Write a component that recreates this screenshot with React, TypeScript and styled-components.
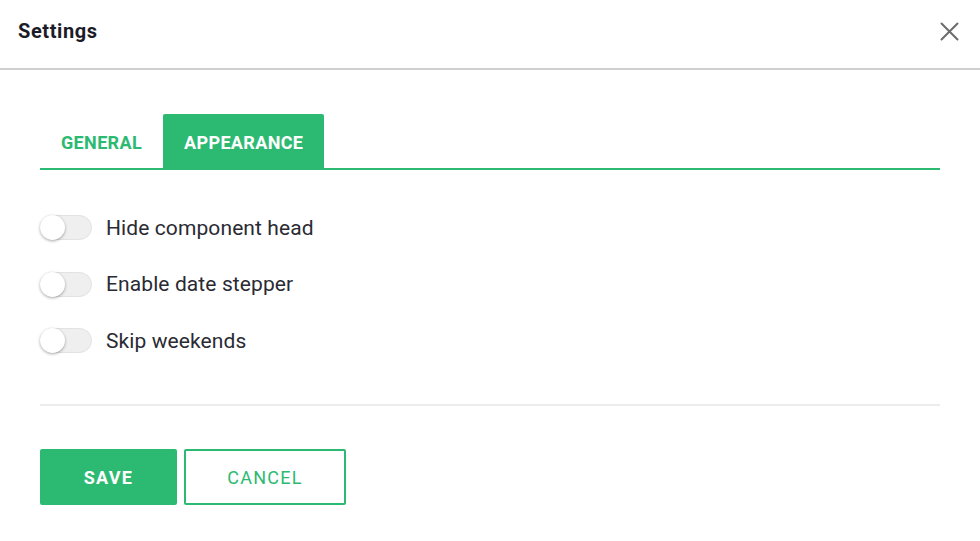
import React, { useState } from "react";
import styled, { createGlobalStyle } from "styled-components";

const GREEN = "#2cba72";

const Global = createGlobalStyle`
  html, body { margin: 0; padding: 0; background: #fff; }
  body { font-family: Roboto, "Noto Sans", sans-serif; }
  * { box-sizing: border-box; }
`;

const Dialog = styled.div`
  width: 980px;
  height: 541px;
  background: #fff;
  display: flex;
  flex-direction: column;
`;

const Header = styled.header`
  height: 70px;
  border-bottom: 2px solid #cfcfcf;
  display: flex;
  align-items: center;
  justify-content: space-between;
  padding: 0 20px 0 18px;
`;

const Title = styled.h1`
  margin: 0;
  font-size: 20px;
  font-weight: 700;
  letter-spacing: 0.6px;
  color: #1c1c28;
  padding-bottom: 6px;
`;

const CloseButton = styled.button`
  border: none;
  background: none;
  padding: 0;
  width: 22px;
  height: 22px;
  display: flex;
  align-items: center;
  justify-content: center;
  cursor: pointer;
  margin-bottom: 6px;
`;

const Body = styled.div`
  padding: 44px 40px 0 40px;
  display: flex;
  flex-direction: column;
`;

const TabBar = styled.div`
  display: flex;
  border-bottom: 2px solid ${GREEN};
  height: 56px;
`;

const Tab = styled.button<{ $active?: boolean }>`
  border: none;
  border-radius: 2px 2px 0 0;
  padding: 2px 21px 0;
  height: 54px;
  font-family: Roboto, sans-serif;
  font-size: 18px;
  font-weight: 700;
  letter-spacing: 0.35px;
  background: ${(p) => (p.$active ? GREEN : "transparent")};
  color: ${(p) => (p.$active ? "#fff" : GREEN)};
  cursor: pointer;
`;

const Options = styled.div`
  display: flex;
  flex-direction: column;
  padding-top: 45px;
  gap: 31.5px;
  padding-bottom: 51px;
  border-bottom: 2px solid #ececec;
`;

const Row = styled.label`
  display: flex;
  align-items: center;
  gap: 14px;
  height: 25px;
  cursor: pointer;
`;

const Track = styled.span<{ $on: boolean }>`
  position: relative;
  width: 52px;
  height: 25px;
  border-radius: 13px;
  background: ${(p) => (p.$on ? "#a6e3c3" : "#efefef")};
  border: 1px solid #e2e2e2;
  flex-shrink: 0;
`;

const Knob = styled.span<{ $on: boolean }>`
  position: absolute;
  top: -1px;
  left: ${(p) => (p.$on ? "26px" : "-1px")};
  width: 25px;
  height: 25px;
  border-radius: 50%;
  background: ${(p) => (p.$on ? GREEN : "#fff")};
  box-shadow: 0 1px 3px rgba(0, 0, 0, 0.35);
`;

const Label = styled.span`
  font-size: 21px;
  color: #2a2a33;
  letter-spacing: 0.1px;
`;

const Actions = styled.div`
  display: flex;
  gap: 7px;
  padding-top: 43px;
`;

const Button = styled.button<{ $primary?: boolean }>`
  height: 56px;
  padding: 0;
  width: ${(p) => (p.$primary ? "137px" : "162px")};
  border-radius: 2px;
  border: 2px solid ${GREEN};
  background: ${(p) => (p.$primary ? GREEN : "#fff")};
  color: ${(p) => (p.$primary ? "#fff" : GREEN)};
  font-family: Roboto, sans-serif;
  font-size: 18px;
  font-weight: ${(p) => (p.$primary ? 700 : 400)};
  letter-spacing: 1.3px;
  cursor: pointer;
`;

const Toggle: React.FC<{ label: string }> = ({ label }) => {
  const [on, setOn] = useState(false);
  return (
    <Row onClick={() => setOn(!on)}>
      <Track $on={on}>
        <Knob $on={on} />
      </Track>
      <Label>{label}</Label>
    </Row>
  );
};

export default function App() {
  const [tab, setTab] = useState("appearance");
  return (
    <>
      <Global />
      <Dialog>
        <Header>
          <Title>Settings</Title>
          <CloseButton aria-label="Close">
            <svg width="19" height="19" viewBox="0 0 19 19">
              <path d="M1.5 1.5 L17.5 17.5 M17.5 1.5 L1.5 17.5" stroke="#6b6b6b" strokeWidth="2" strokeLinecap="round" />
            </svg>
          </CloseButton>
        </Header>
        <Body>
          <TabBar>
            <Tab $active={tab === "general"} onClick={() => setTab("general")}>GENERAL</Tab>
            <Tab $active={tab === "appearance"} onClick={() => setTab("appearance")}>APPEARANCE</Tab>
          </TabBar>
          <Options>
            <Toggle label="Hide component head" />
            <Toggle label="Enable date stepper" />
            <Toggle label="Skip weekends" />
          </Options>
          <Actions>
            <Button $primary>SAVE</Button>
            <Button>CANCEL</Button>
          </Actions>
        </Body>
      </Dialog>
    </>
  );
}
